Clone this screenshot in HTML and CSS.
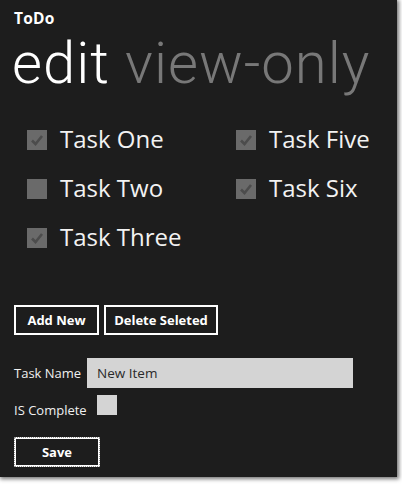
FILE: index.html
```html
<!DOCTYPE html>
<html>
<head>
<meta charset="utf-8">
<link rel="stylesheet" href="styles.css">
</head>
<body>
<div class="app">
  <div class="app-title">ToDo</div>
  <div class="pivot"><span class="pivot-active">edit</span> <span class="pivot-inactive">view-only</span></div>
  <div class="tasks">
    <div class="task"><span class="box checked"><svg viewBox="0 0 20 20"><path d="M5 10.5 L8.5 14 L15 6" /></svg></span><span class="task-label">Task One</span></div>
    <div class="task"><span class="box checked"><svg viewBox="0 0 20 20"><path d="M5 10.5 L8.5 14 L15 6" /></svg></span><span class="task-label">Task Five</span></div>
    <div class="task"><span class="box"></span><span class="task-label">Task Two</span></div>
    <div class="task"><span class="box checked"><svg viewBox="0 0 20 20"><path d="M5 10.5 L8.5 14 L15 6" /></svg></span><span class="task-label">Task Six</span></div>
    <div class="task"><span class="box checked"><svg viewBox="0 0 20 20"><path d="M5 10.5 L8.5 14 L15 6" /></svg></span><span class="task-label">Task Three</span></div>
  </div>
  <div class="actions">
    <button class="btn btn-add">Add New</button>
    <button class="btn btn-delete">Delete Seleted</button>
  </div>
  <div class="form-row">
    <span class="form-label">Task Name</span>
    <div class="text-input">New Item</div>
  </div>
  <div class="form-row form-row-check">
    <span class="form-label">IS Complete</span>
    <span class="light-box"></span>
  </div>
  <button class="btn btn-save">Save</button>
</div>
</body>
</html>
```
FILE: styles.css
```css
html, body {
  margin: 0;
  padding: 0;
  background: #ffffff;
}
body {
  width: 402px;
  height: 484px;
  overflow: hidden;
  font-family: "Open Sans", "Noto Sans", sans-serif;
}
.app {
  width: 397px;
  height: 477px;
  background: #1d1d1d;
  box-shadow: 1px 1px 4px 1px rgba(0,0,0,0.55);
  box-sizing: border-box;
  padding: 7px 0 0 14px;
  color: #ffffff;
  display: flex;
  flex-direction: column;
  align-items: flex-start;
}
.app-title {
  font-size: 15.5px;
  font-weight: 700;
  line-height: 22px;
  letter-spacing: 0.2px;
}
.pivot {
  font-family: Roboto, "Open Sans", sans-serif;
  font-size: 58px;
  font-weight: 300;
  line-height: 68px;
  margin-left: -2px;
  letter-spacing: 1px;
  white-space: nowrap;
}
.pivot-active { color: #ffffff; }
.pivot-inactive { color: #787878; }
.tasks {
  margin-top: 33px;
  margin-left: 13px;
  display: grid;
  grid-template-columns: 209px auto;
  row-gap: 29px;
}
.task {
  display: flex;
  align-items: center;
  height: 20px;
}
.box {
  width: 20px;
  height: 20px;
  background: #6a6a6a;
  display: inline-block;
  flex: none;
}
.box svg {
  width: 20px;
  height: 20px;
  display: block;
}
.box svg path {
  fill: none;
  stroke: #4c4c4c;
  stroke-width: 2.6;
}
.task-label {
  margin-left: 13px;
  font-size: 24px;
  font-weight: 400;
  line-height: 20px;
  position: relative;
  top: -1px;
  color: #f2f2f2;
}
.actions {
  margin-top: 57px;
  display: flex;
  gap: 5px;
}
.btn {
  background: transparent;
  border: 2px solid #ffffff;
  color: #ffffff;
  font-family: "Open Sans", "Noto Sans", sans-serif;
  font-weight: 700;
  font-size: 13px;
  height: 30px;
  padding: 0;
  box-sizing: border-box;
  cursor: pointer;
}
.btn-add { width: 85px; }
.btn-delete { width: 114px; }
.form-row {
  display: flex;
  align-items: center;
  margin-top: 23px;
}
.form-label {
  font-size: 13px;
  color: #f0f0f0;
  width: 73px;
  flex: none;
}
.text-input {
  width: 266px;
  height: 30px;
  box-sizing: border-box;
  background: #d4d4d4;
  color: #2a2a2a;
  font-size: 13.5px;
  line-height: 30px;
  padding-left: 10px;
}
.form-row-check {
  margin-top: 7px;
  align-items: flex-end;
}
.form-row-check .form-label {
  width: auto;
  margin-right: 10px;
  line-height: 18px;
}
.light-box {
  width: 20px;
  height: 20px;
  background: #d4d4d4;
  display: inline-block;
  margin-bottom: 4px;
}
.btn-save {
  margin-top: 18px;
  width: 86px;
  outline: 1px dotted #9a9a9a;
  outline-offset: -1px;
}
```
